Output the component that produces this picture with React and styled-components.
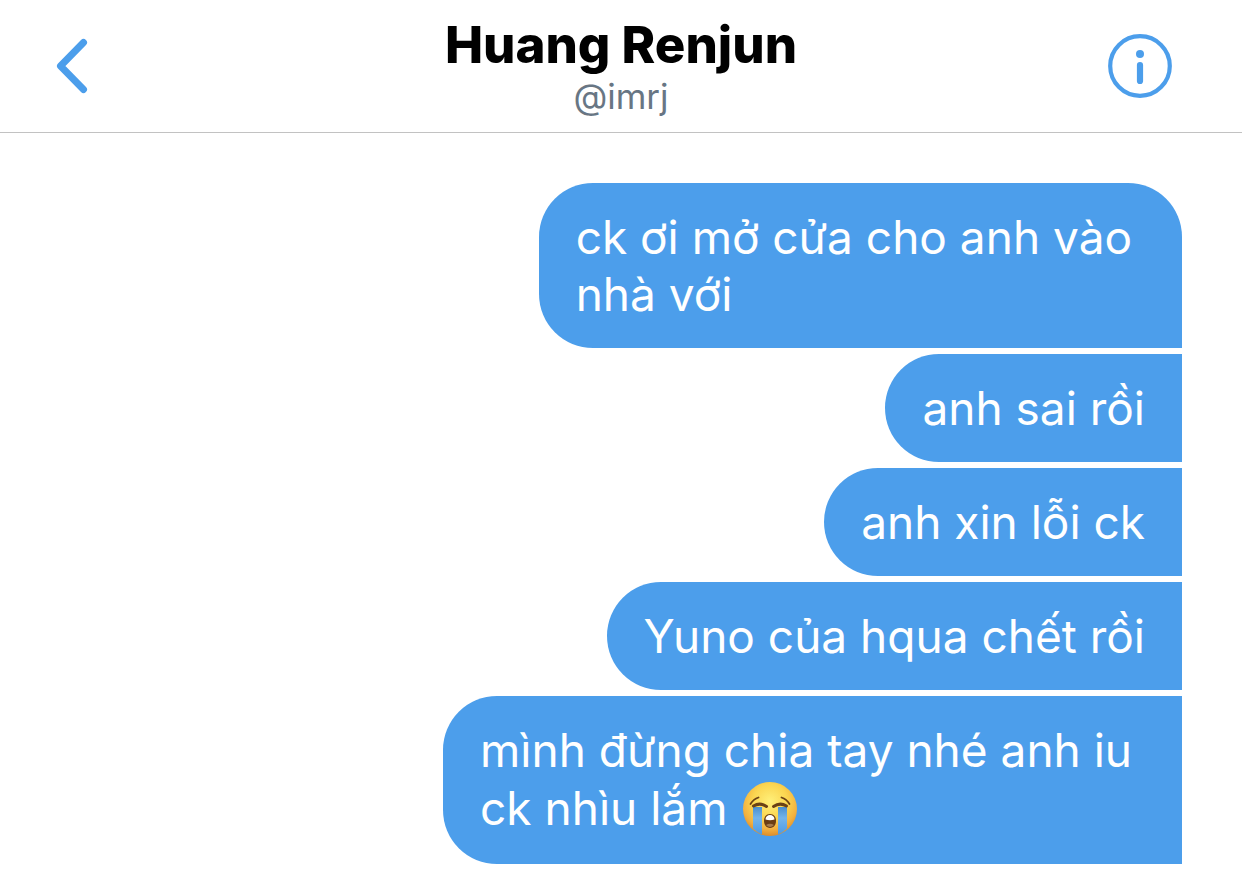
import {Component} from 'react'
import styled, {createGlobalStyle} from 'styled-components'

const GlobalStyle = createGlobalStyle`
* {
  box-sizing: border-box;
}
body {
  margin: 0;
  background-color: #ffffff;
  font-family: Inter, 'Noto Sans', sans-serif;
}
`

const MainContainer = styled.div`
min-height: 100vh;
display: flex;
flex-direction: column;
`

const Header = styled.header`
display: grid;
grid-template-columns: 64px 1fr 64px;
align-items: center;
padding: 15px 70px 15px 40px;
border-bottom: 1px solid #c2c2c2;
`

const HeaderButton = styled.button`
border: 0;
padding: 0;
width: 64px;
height: 64px;
background-color: transparent;
color: #4c9eeb;
cursor: pointer;
`

const Icon = styled.svg`
display: block;
width: 64px;
height: 64px;
fill: none;
stroke: currentColor;
`

const ProfileContainer = styled.div`
padding-left: 30px;
text-align: center;
`

const Name = styled.h1`
margin: 0;
color: #000000;
font-size: 51px;
font-weight: 800;
line-height: 60px;
`

const Handle = styled.p`
margin: 0;
color: #687684;
font-size: 35px;
line-height: 42px;
`

const MessagesList = styled.ul`
margin: 0;
padding: 50px 60px 17px;
list-style: none;
display: flex;
flex-direction: column;
align-items: flex-end;
gap: 6px;
`

const Bubble = styled.li`
padding: 26px 37px 25px;
border-radius: ${props => (props.$first ? '54px 54px 0 54px' : '54px 0 0 54px')};
background-color: #4c9eeb;
color: #ffffff;
font-size: 46px;
line-height: 57px;
white-space: pre;
`

const EmojiIcon = styled.svg`
width: 60px;
height: 60px;
vertical-align: -14px;
`

const CryingEmoji = () => (
  <EmojiIcon viewBox="-1 -1 60 60" role="img" aria-label="loudly crying face">
    <defs>
      <radialGradient id="face" cx="50%" cy="36%" r="64%">
        <stop offset="0" stopColor="#fff07a" />
        <stop offset="0.5" stopColor="#fbd550" />
        <stop offset="0.8" stopColor="#f2b140" />
        <stop offset="1" stopColor="#dd8c2a" />
      </radialGradient>
      <linearGradient id="tears" x1="0" y1="0" x2="0" y2="1">
        <stop offset="0" stopColor="#4a8fd0" />
        <stop offset="0.4" stopColor="#74b4ea" />
        <stop offset="1" stopColor="#4b9ae6" />
      </linearGradient>
    </defs>
    <circle cx="29" cy="29" r="27" fill="url(#face)" />
    <path d="M12 27h9v27.500q-5-2-9-6z" fill="url(#tears)" />
    <path d="M37 27h9v21.500q-4 4-9 6z" fill="url(#tears)" />
    <g fill="none" stroke="#6b4216" strokeLinecap="round">
      <path d="M9.500 24q3-5 8-6.500" strokeWidth="1.800" />
      <path d="M48.500 24q-3-5-8-6.500" strokeWidth="1.800" />
      <path d="M12.500 26q6.500-4 13 .500" strokeWidth="3" />
      <path d="M45.500 26q-6.500-4-13 .500" strokeWidth="3" />
    </g>
    <path
      d="M29 34c4 0 6 3 6 6.800s-2 7.200-6 7.200-6-3.400-6-7.200 2-6.800 6-6.800z"
      fill="#6b3d12"
    />
    <path d="M24.500 39.500c0-3 2-4.500 4.500-4.500s4.500 1.500 4.500 4.500q-4.500 1.500-9 0z" fill="#ffffff" />
    <path d="M25 45q4-2.500 8 0-2 2-4 2t-4-2z" fill="#a57a4a" />
  </EmojiIcon>
)

const messagesList = [
  {id: 1, text: 'ck ơi mở cửa cho anh vào \nnhà với'},
  {id: 2, text: 'anh sai rồi'},
  {id: 3, text: 'anh xin lỗi ck'},
  {id: 4, text: 'Yuno của hqua chết rồi'},
  {id: 5, text: 'mình đừng chia tay nhé anh iu \nck nhìu lắm ', crying: true},
]

class App extends Component {
  renderHeader = () => (
    <Header>
      <HeaderButton type="button" aria-label="Back">
        <Icon viewBox="0 0 64 64">
          <path
            d="M43.500 8.500L20.500 32L43.500 55.500"
            strokeWidth="7"
            strokeLinecap="round"
            strokeLinejoin="round"
          />
        </Icon>
      </HeaderButton>
      <ProfileContainer>
        <Name>Huang Renjun</Name>
        <Handle>@imrj</Handle>
      </ProfileContainer>
      <HeaderButton type="button" aria-label="Info">
        <Icon viewBox="0 0 64 64">
          <circle cx="32" cy="32" r="29.800" strokeWidth="4.200" />
          <circle cx="32" cy="20" r="4" fill="currentColor" stroke="none" />
          <path d="M32 31V47" strokeWidth="6.200" strokeLinecap="round" />
        </Icon>
      </HeaderButton>
    </Header>
  )

  render() {
    return (
      <MainContainer>
        <GlobalStyle />
        {this.renderHeader()}
        <MessagesList>
          {messagesList.map((eachItem, index) => (
            <Bubble key={eachItem.id} $first={index === 0}>
              {eachItem.text}
              {eachItem.crying && <CryingEmoji />}
            </Bubble>
          ))}
        </MessagesList>
      </MainContainer>
    )
  }
}

export default App
